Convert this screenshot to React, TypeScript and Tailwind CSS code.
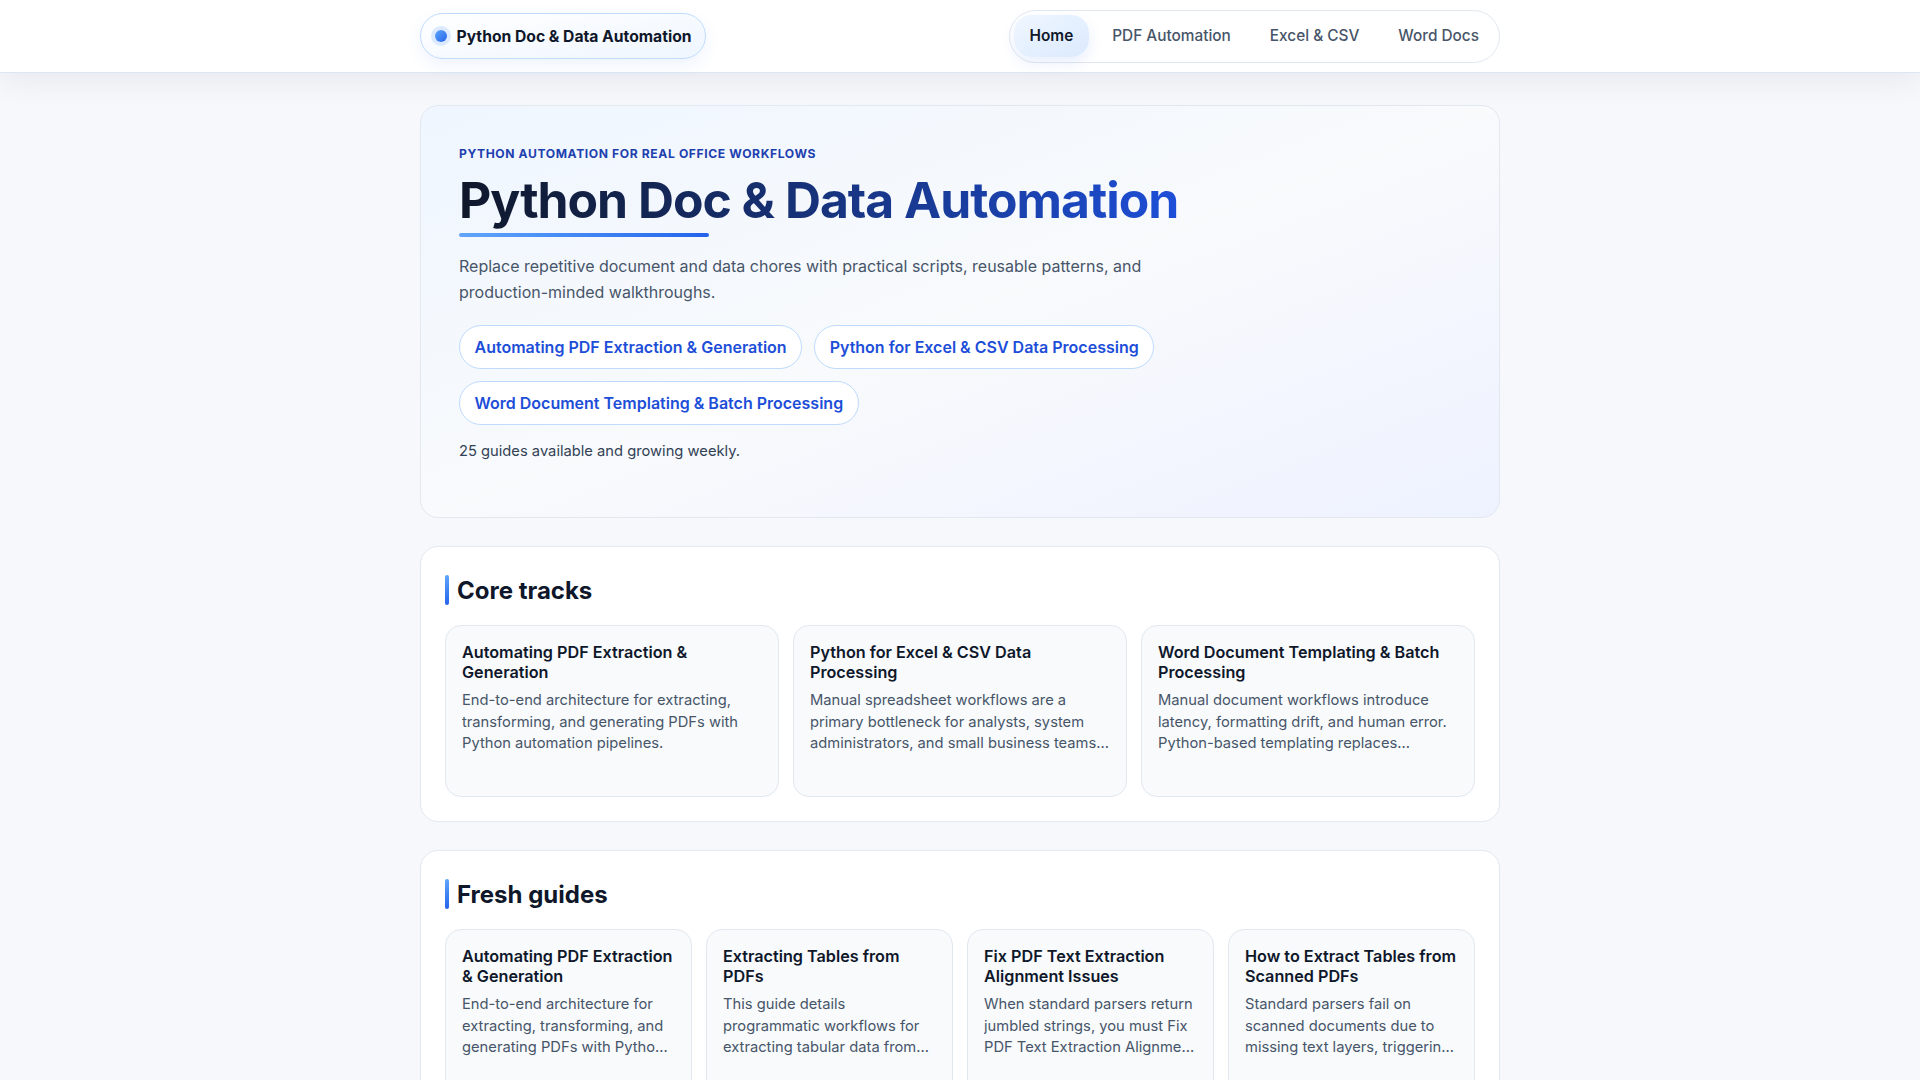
const navLinks = ["PDF Automation", "Excel & CSV", "Word Docs"];

const heroLinks = [
  "Automating PDF Extraction & Generation",
  "Python for Excel & CSV Data Processing",
  "Word Document Templating & Batch Processing",
];

const coreTracks = [
  {
    title: "Automating PDF Extraction & Generation",
    body: "End-to-end architecture for extracting, transforming, and generating PDFs with Python automation pipelines.",
  },
  {
    title: "Python for Excel & CSV Data Processing",
    body: "Manual spreadsheet workflows are a primary bottleneck for analysts, system administrators, and small business teams who need repeatable results.",
  },
  {
    title: "Word Document Templating & Batch Processing",
    body: "Manual document workflows introduce latency, formatting drift, and human error. Python-based templating replaces repetitive editing with code.",
  },
];

const freshGuides = [
  {
    title: "Automating PDF Extraction & Generation",
    body: "End-to-end architecture for extracting, transforming, and generating PDFs with Python automation pipelines.",
  },
  {
    title: "Extracting Tables from PDFs",
    body: "This guide details programmatic workflows for extracting tabular data from PDF documents with Python libraries.",
  },
  {
    title: "Fix PDF Text Extraction Alignment Issues",
    body: "When standard parsers return jumbled strings, you must Fix PDF Text Extraction Alignment Issues at the layout level.",
  },
  {
    title: "How to Extract Tables from Scanned PDFs",
    body: "Standard parsers fail on scanned documents due to missing text layers, triggering empty results and silent failures.",
  },
];

function GuideCard({ title, body }: { title: string; body: string }) {
  return (
    <a className="block h-[172px] rounded-2xl border border-[#e2e8f0] bg-[#f8fafc] p-4">
      <h3 className="text-[16.2px] leading-[20px] font-semibold text-[#0f172a]">{title}</h3>
      <p className="mt-2 line-clamp-3 text-[14.72px] leading-[21.5px] text-[#475569]">{body}</p>
    </a>
  );
}

function Section({ title, children }: { title: string; children: React.ReactNode }) {
  return (
    <section className="rounded-[18px] border border-[#e2e8f0] bg-white px-6 pt-7 pb-6">
      <div className="mb-5 flex h-[30px] items-center gap-2">
        <span className="h-[30px] w-1 rounded-sm bg-gradient-to-b from-[#60a5fa] to-[#2563eb]" />
        <h2 className="mt-[2px] text-[24px] leading-[30px] font-bold text-[#0f172a]">{title}</h2>
      </div>
      {children}
    </section>
  );
}

export default function App() {
  return (
    <div className="h-screen overflow-hidden bg-[#f6f8fc] font-['Inter',sans-serif]">
      <header className="relative z-10 border-b border-[#dbe7f5] bg-white shadow-[0_10px_30px_rgba(15,23,42,0.06)]">
        <div className="mx-auto flex h-[72px] w-[1080px] items-center justify-between">
          <a className="flex h-[46px] items-center gap-[10px] rounded-full border border-[#bfdbfe] bg-gradient-to-br from-white to-[#eff6ff] px-[13.5px] shadow-[0_6px_16px_rgba(37,99,235,0.08)]">
            <span className="size-3 rounded-full bg-gradient-to-br from-[#60a5fa] to-[#2563eb] shadow-[0_0_0_4px_#dbeafe]" />
            <span className="mt-[2px] text-[15.68px] font-bold text-[#0f172a]">Python Doc &amp; Data Automation</span>
          </a>
          <nav className="flex h-[53px] items-center gap-[7px] rounded-full border border-[#e2e8f0] bg-white px-1 py-[5px]">
            <a className="flex h-[42px] items-center rounded-[18px] bg-gradient-to-br from-[#eff6ff] to-[#dbeafe] px-4 text-[15.36px] font-semibold text-[#0f172a] shadow-[0_6px_14px_rgba(37,99,235,0.1)]">
              Home
            </a>
            {navLinks.map((label) => (
              <a key={label} className="flex h-[42px] items-center px-4 text-[15.36px] font-medium text-[#475569]">
                {label}
              </a>
            ))}
          </nav>
        </div>
      </header>

      <main className="mx-auto flex w-[1080px] flex-col gap-7 pt-8">
        <section className="h-[413px] rounded-[18px] border border-[#e2e8f0] bg-gradient-to-br from-[#eff6ff] via-[#f8fafc] to-[#eef2ff] px-[38px] pt-[40px]">
          <p className="text-[12.12px] leading-4 font-bold tracking-[0.05em] text-[#1e40af] uppercase">
            Python automation for real office workflows
          </p>
          <h1 className="mt-2 w-fit bg-gradient-to-r from-[#0f172a] to-[#1d4ed8] bg-clip-text text-[49.84px] leading-[60px] font-bold tracking-[-0.02em] text-transparent">
            Python Doc &amp; Data Automation
          </h1>
          <div className="mt-[3px] h-1 w-[250px] rounded-full bg-gradient-to-r from-[#60a5fa] to-[#2563eb]" />
          <p className="mt-4 w-[720px] text-[16px] leading-[26.4px] text-[#475569]">
            Replace repetitive document and data chores with practical scripts, reusable patterns, and production-minded
            walkthroughs.
          </p>
          <div className="mt-[19px] flex w-[900px] flex-wrap gap-3">
            {heroLinks.map((label) => (
              <a
                key={label}
                className="flex h-11 items-center rounded-full border border-[#bfdbfe] bg-white px-[14.5px] text-[16px] font-semibold text-[#1d4ed8]"
              >
                {label}
              </a>
            ))}
          </div>
          <p className="mt-[14px] text-[14.72px] leading-6 text-[#334155]">25 guides available and growing weekly.</p>
        </section>

        <Section title="Core tracks">
          <div className="grid grid-cols-3 gap-[14px]">
            {coreTracks.map((t) => (
              <GuideCard key={t.title} {...t} />
            ))}
          </div>
        </Section>

        <Section title="Fresh guides">
          <div className="grid grid-cols-4 gap-[14px]">
            {freshGuides.map((t) => (
              <GuideCard key={t.title} {...t} />
            ))}
          </div>
        </Section>
      </main>
    </div>
  );
}
